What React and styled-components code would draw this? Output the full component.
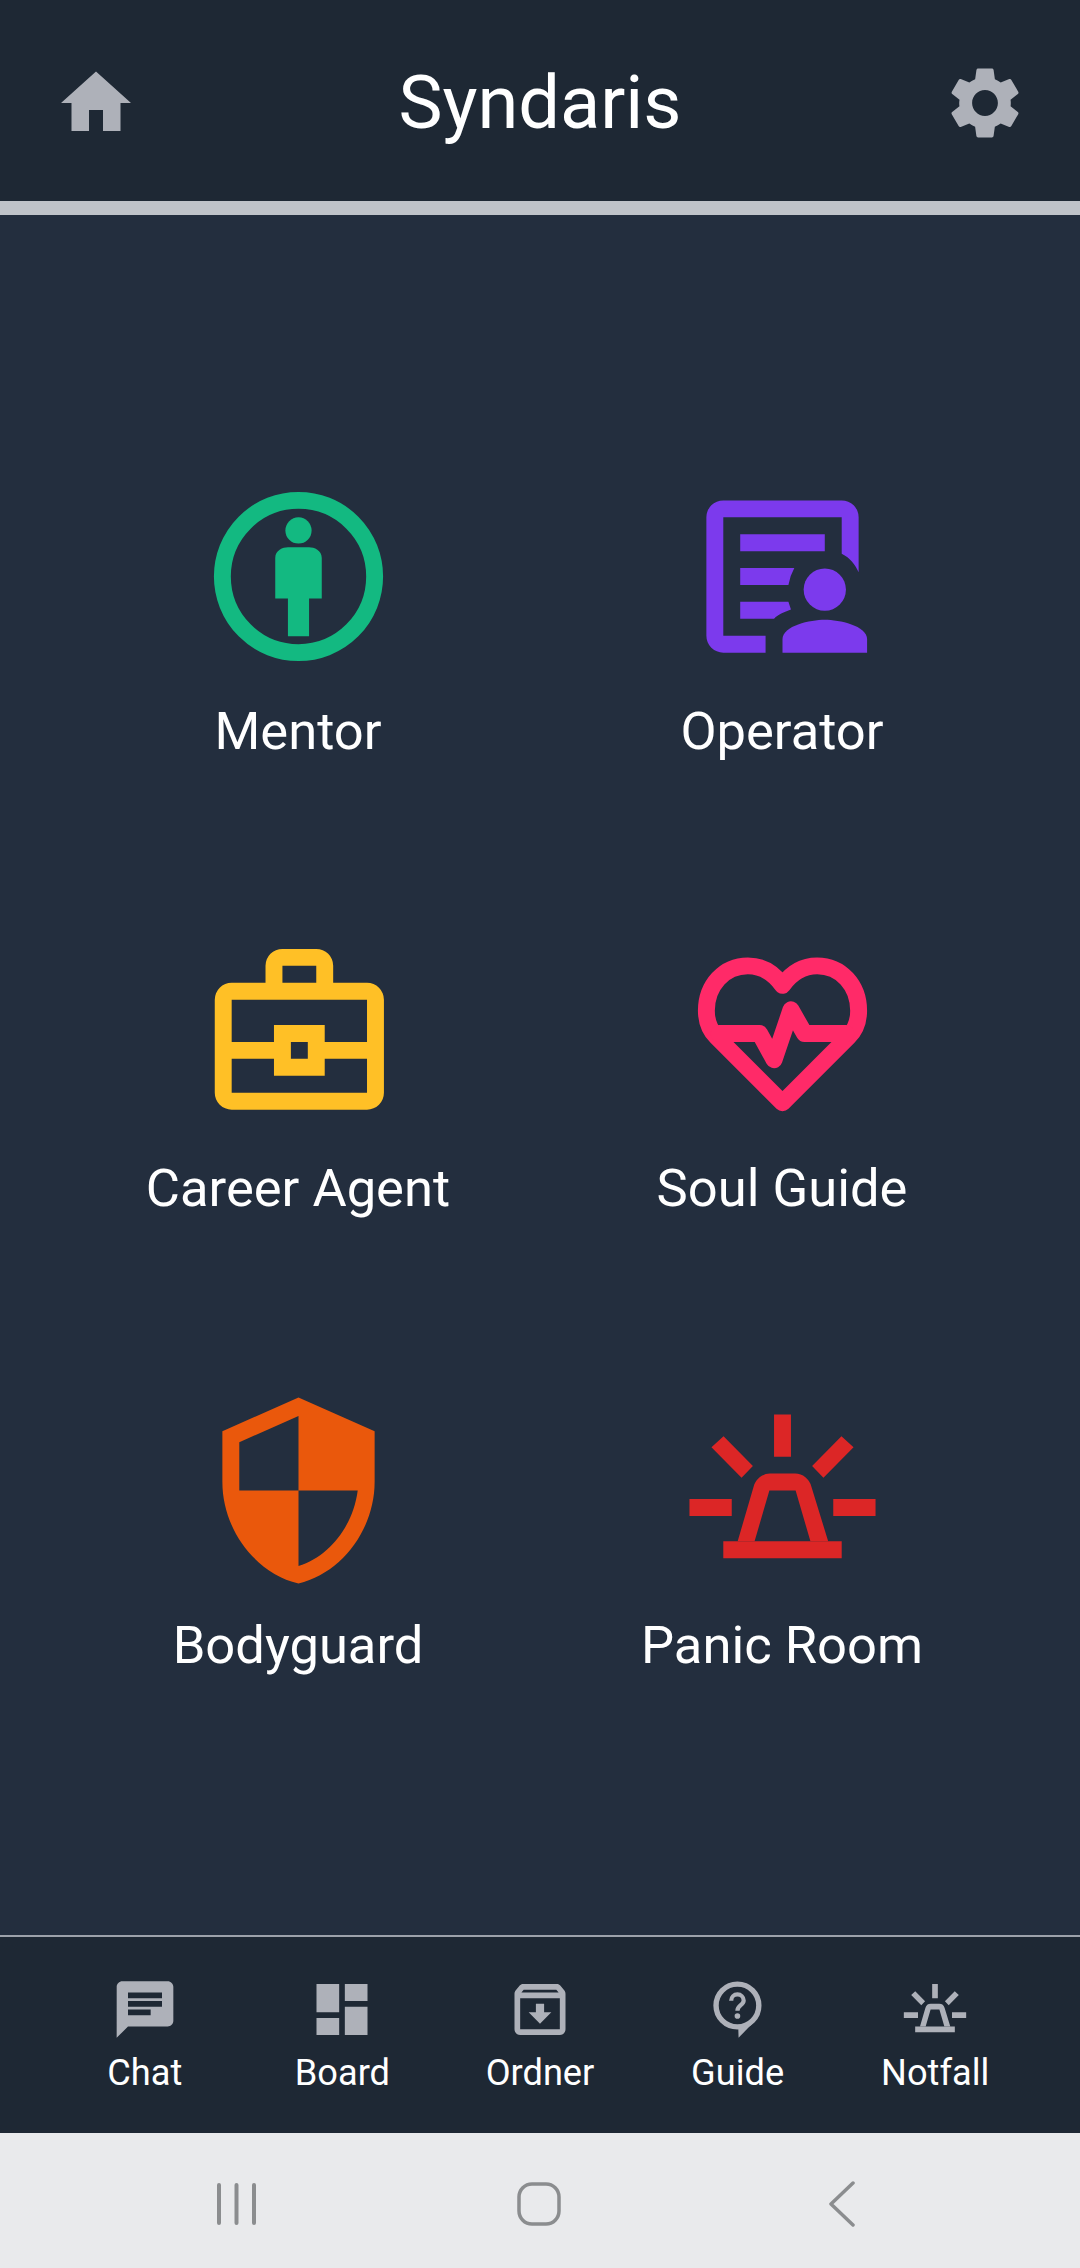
import React from 'react'
import styled, {createGlobalStyle} from 'styled-components'
import {MdHome, MdSettings, MdChat, MdDashboard, MdOutlineArchive} from 'react-icons/md'

const GlobalStyle = createGlobalStyle`
    html, body {
        margin: 0;
        padding: 0;
        background: #232e3e;
    }
    * {
        box-sizing: border-box;
    }
`;

/*icons*/
const MentorIcon = () => (
    <svg viewBox="0 0 24 24" fill="currentColor">
        <circle cx="12" cy="12" r="9" fill="none" stroke="currentColor" strokeWidth="2"/>
        <ellipse cx="12" cy="6.55" rx="1.55" ry="1.55"/>
        <path d="M9.25 14.6V9.8c0-.9.9-1.25 1.5-1.25h2.5c.6 0 1.5.35 1.5 1.25v4.8h-1.5V19.05h-2.5V14.6z"/>
    </svg>
)

const OperatorIcon = () => (
    <svg viewBox="0 0 24 24" fill="currentColor">
        <path d="M5 3h14a2 2 0 0 1 2 2v6.5c-.4-.9-1-1.7-2-2.2V5H5v14h5v2H5a2 2 0 0 1-2-2V5a2 2 0 0 1 2-2z"/>
        <path d="M7 7h10v2H7z"/>
        <path d="M7 11h6.4a6 6 0 0 0-.7 2H7z"/>
        <path d="M7 15h5.7l.3.9c-.8.3-1.6.6-2 1.1H7z"/>
        <ellipse cx="17" cy="13.55" rx="2.5" ry="2.5"/>
        <path d="M12 21v-1.6c0-1.6 3.3-2.3 5-2.3s5 .7 5 2.3V21z"/>
    </svg>
)

const CareerIcon = () => (
    <svg viewBox="0 0 24 24" fill="currentColor">
        <path
            transform="translate(.1 0)"
            fillRule="evenodd"
            d="M4 6h4V4a2 2 0 0 1 2-2h4a2 2 0 0 1 2 2v2h4a2 2 0 0 1 2 2v11a2 2 0 0 1-2 2H4a2 2 0 0 1-2-2V8a2 2 0 0 1 2-2zM10 4v2h4V4zM4 8v5h5v-2h6v2h5V8zM4 15v4h16v-4h-5v2H9v-2zM11 13v2h2v-2z"
        />
    </svg>
)

const SoulIcon = () => (
    <svg viewBox="0 0 24 24" fill="none" stroke="currentColor" strokeWidth="2" strokeLinecap="round" strokeLinejoin="round">
        <path d="M12 6.3C11 4.9 9.6 4 7.9 4 5.1 4 3 6.3 3 9.3c0 1.2.4 2.300 1.200 3.100L12 20.200l7.800-7.800c.8-.8 1.200-1.900 1.200-3.100 0-3-2.100-5.300-4.900-5.300-1.700 0-3.100.9-4.100 2.300z"/>
        <path d="M4.500 12H9.300L11 15.100 13 9.200 14.600 12H19.500"/>
    </svg>
)

const GuardIcon = () => (
    <svg viewBox="0 0 24 24" fill="currentColor">
        <path d="M12 1L3 5v6c0 5.550 3.840 10.740 9 12 5.160-1.260 9-6.450 9-12V5l-9-4zm0 10.990h7c-.530 4.120-3.280 7.790-7 8.940V12H5V6.300l7-3.110v8.800z"/>
    </svg>
)

const SirenIcon = () => (
    <svg viewBox="0 0 24 24" fill="currentColor">
        <path d="M5 18h14v2H5z"/>
        <path
            fillRule="evenodd"
            d="M6.700 18l1.900-6.500A2 2 0 0 1 10.500 10h3a2 2 0 0 1 1.900 1.500L17.400 18zM8.700 18h6.600l-1.750-6h-3.100z"
        />
        <path d="M11 3h2v5h-2zM1 13h5v2H1zM18 13h5v2h-5z"/>
        <path d="M5.030 5.600L3.600 6.900l3.560 3.600L8.500 9.100zM18.970 5.600l1.430 1.300-3.560 3.600L15.500 9.100z"/>
    </svg>
)

const GuideIcon = () => (
    <svg viewBox="0 0 24 24" fill="currentColor">
        <circle cx="11.800" cy="10.600" r="7.550" fill="none" stroke="currentColor" strokeWidth="1.900"/>
        <path d="M12.100 18.500l.1 3.500 5.300-5.500z"/>
        <path
            d="M9.600 8.900c0-1.300 1-2.200 2.200-2.200s2.200.9 2.200 2.100c0 1.700-2.200 1.700-2.200 3.600"
            fill="none"
            stroke="currentColor"
            strokeWidth="1.500"
        />
        <circle cx="11.800" cy="14.300" r="1"/>
    </svg>
)

const items = [
    {label: 'Mentor', color: '#13b981', Icon: MentorIcon},
    {label: 'Operator', color: '#7c3aed', Icon: OperatorIcon},
    {label: 'Career Agent', color: '#ffc026', Icon: CareerIcon},
    {label: 'Soul Guide', color: '#ff2a68', Icon: SoulIcon},
    {label: 'Bodyguard', color: '#ea580c', Icon: GuardIcon},
    {label: 'Panic Room', color: '#dc2626', Icon: SirenIcon},
]

const tabs = [
    {label: 'Chat', Icon: MdChat},
    {label: 'Board', Icon: MdDashboard},
    {label: 'Ordner', Icon: MdOutlineArchive},
    {label: 'Guide', Icon: GuideIcon},
    {label: 'Notfall', Icon: SirenIcon},
]

const App = () => (
    <Screen>
        <GlobalStyle/>
        <Header>
            <HeaderButton $size={84}><MdHome/></HeaderButton>
            <Title>Syndaris</Title>
            <HeaderButton $size={86}><MdSettings/></HeaderButton>
        </Header>
        <Main>
            {items.map(({label, color, Icon}) => (
                <Tile key={label} $color={color}>
                    <Icon/>
                    <TileLabel>{label}</TileLabel>
                </Tile>
            ))}
        </Main>
        <TabBar>
            {tabs.map(({label, Icon}) => (
                <Tab key={label}>
                    <Icon/>
                    <TabLabel>{label}</TabLabel>
                </Tab>
            ))}
        </TabBar>
        <SystemBar>
            <SystemButton>
                <svg width="41" height="44" viewBox="0 0 41 44" fill="none" stroke="currentColor" strokeWidth="4" strokeLinecap="round">
                    <path d="M3 3v38M20.500 3v38M38 3v38"/>
                </svg>
            </SystemButton>
            <SystemButton>
                <svg width="44" height="44" viewBox="0 0 44 44" fill="none" stroke="currentColor" strokeWidth="3.500">
                    <rect x="2" y="2" width="40" height="40" rx="13"/>
                </svg>
            </SystemButton>
            <SystemButton>
                <svg width="26" height="46" viewBox="0 0 26 46" fill="none" stroke="currentColor" strokeWidth="3.500" strokeLinecap="round" strokeLinejoin="round">
                    <path d="M24 2L2 23l22 21"/>
                </svg>
            </SystemButton>
        </SystemBar>
    </Screen>
)

export default App

const Screen = styled.div`
    width: 1080px;
    height: 2268px;
    display: flex;
    flex-direction: column;
    overflow: hidden;
    background: #232e3e;
    font-family: Roboto, "Liberation Sans", sans-serif;
    color: #ffffff;
`;

const Header = styled.header`
    height: 215px;
    flex: none;
    display: flex;
    align-items: center;
    justify-content: space-between;
    padding: 5px 52px 0 54px;
    background: #1e2834;
    border-bottom: 14px solid #bfc3c9;
`;

const HeaderButton = styled.div`
    width: ${props => props.$size}px;
    height: ${props => props.$size}px;
    color: #aeb1b9;

    svg {
        display: block;
        width: 100%;
        height: 100%;
    }
`;

const Title = styled.h1`
    margin: 0;
    font-size: 74px;
    line-height: 84px;
    font-weight: 400;
`;

const Main = styled.main`
    flex: 1;
    display: grid;
    grid-template-columns: repeat(2, 484px);
    grid-auto-rows: 457px;
    justify-content: center;
    padding-top: 260px;
`;

const Tile = styled.div`
    display: flex;
    flex-direction: column;
    align-items: center;
    color: ${props => props.$color};

    svg {
        display: block;
        width: 203px;
        height: 203px;
    }
`;

const TileLabel = styled.span`
    margin-top: 23px;
    font-size: 52.5px;
    line-height: 60px;
    color: #ffffff;
`;

const TabBar = styled.nav`
    height: 198px;
    flex: none;
    display: grid;
    grid-template-columns: repeat(5, 1fr);
    padding: 38px 46px 0;
    background: #1e2834;
    border-top: 2px solid #9ca1aa;
`;

const Tab = styled.div`
    display: flex;
    flex-direction: column;
    align-items: center;
    color: #aeb1b9;

    svg {
        display: block;
        width: 68px;
        height: 69px;
    }
`;

const TabLabel = styled.span`
    margin-top: 7px;
    font-size: 36.2px;
    line-height: 44px;
    color: #ffffff;
`;

const SystemBar = styled.div`
    height: 135px;
    flex: none;
    display: grid;
    grid-template-columns: repeat(3, 303px);
    justify-content: center;
    align-items: center;
    padding: 6px 2px 0 0;
    background: #e9eaec;
`;

const SystemButton = styled.div`
    display: flex;
    justify-content: center;
    color: #8b8d8f;

    svg {
        display: block;
    }
`;
